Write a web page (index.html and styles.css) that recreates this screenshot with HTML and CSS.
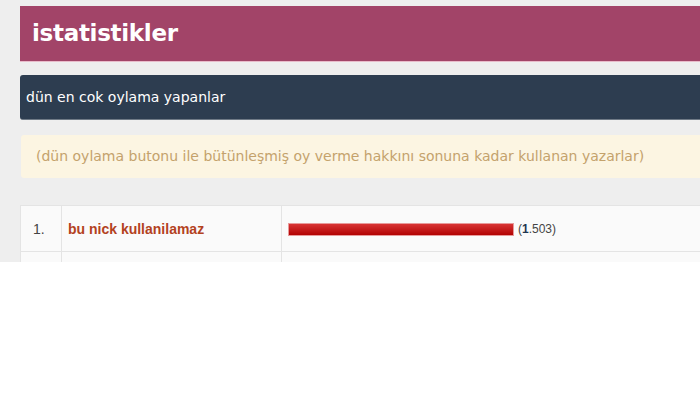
FILE: index.html
```html
<!DOCTYPE html>
<html lang="tr">
<head>
  <meta charset="UTF-8">
  <meta name="viewport" content="width=device-width, initial-scale=1">
  <title>istatistikler</title>
  <link rel="stylesheet" href="styles.css">
</head>
<body>
  <div class="page">
    <div class="content">
      <h1 class="title">istatistikler</h1>
      <div class="section-bar">dün en cok oylama yapanlar</div>
      <div class="note">(dün oylama butonu ile bütünleşmiş oy verme hakkını sonuna kadar kullanan yazarlar)</div>
      <table class="stats">
        <tbody>
          <tr>
            <td class="rank">1.</td>
            <td class="nick"><a href="#">bu nick kullanilamaz</a></td>
            <td class="score"><span class="bar" style="width: 226px"></span><span class="count">(<b>1</b>.503)</span></td>
          </tr>
          <tr>
            <td class="rank"></td>
            <td class="nick"></td>
            <td class="score"></td>
          </tr>
        </tbody>
      </table>
    </div>
  </div>
</body>
</html>
```

FILE: styles.css
```css
body {
  margin: 0;
  background: #fff;
  font-family: "DejaVu Sans", Verdana, sans-serif;
}
.page {
  height: 262px;
  overflow: hidden;
  background: #eeeeee;
  padding: 6px 0 0 20px;
  box-sizing: border-box;
}
.content {
  width: 720px;
}
.title {
  margin: 0;
  height: 55px;
  line-height: 55px;
  padding: 0 12px;
  background: #a24468;
  border-bottom: 1px solid #e9bccb;
  color: #fff;
  font-size: 23px;
  font-weight: bold;
  letter-spacing: -0.3px;
}
.section-bar {
  margin-top: 13px;
  padding: 14px 6px 13px;
  line-height: 17px;
  background: #2d3d50;
  border-bottom: 1px solid #6f7a86;
  border-radius: 3px;
  color: #fff;
  font-size: 14px;
}
.note {
  margin-top: 15px;
  margin-left: 1px;
  padding: 13px 15px;
  line-height: 17px;
  background: #fcf5e2;
  border-radius: 3px;
  color: #c4a26c;
  font-size: 14px;
}
.stats {
  margin-top: 27px;
  width: 720px;
  border-collapse: collapse;
  background: #fafafa;
  border-top: 1px solid #dcdcdc;
  border-left: 1px solid #e2e2e2;
  font-family: "Liberation Sans", Arial, sans-serif;
}
.stats td {
  height: 45px;
  padding: 0 6px;
  border: 1px solid #e4e4e4;
  vertical-align: middle;
}
.stats .rank {
  width: 22px;
  padding-left: 12px;
  color: #444;
  font-size: 14px;
}
.stats .nick {
  width: 207px;
  font-size: 14px;
}
.nick a {
  color: #b3421e;
  font-weight: bold;
  text-decoration: none;
}
.bar {
  display: inline-block;
  height: 13px;
  vertical-align: middle;
  box-sizing: border-box;
  border: 1px solid #e79a9a;
  background: linear-gradient(#d83434, #b20202);
}
.count {
  margin-left: 4px;
  vertical-align: middle;
  color: #444;
  font-size: 12px;
}
.count b {
  color: #1f3550;
}
```
